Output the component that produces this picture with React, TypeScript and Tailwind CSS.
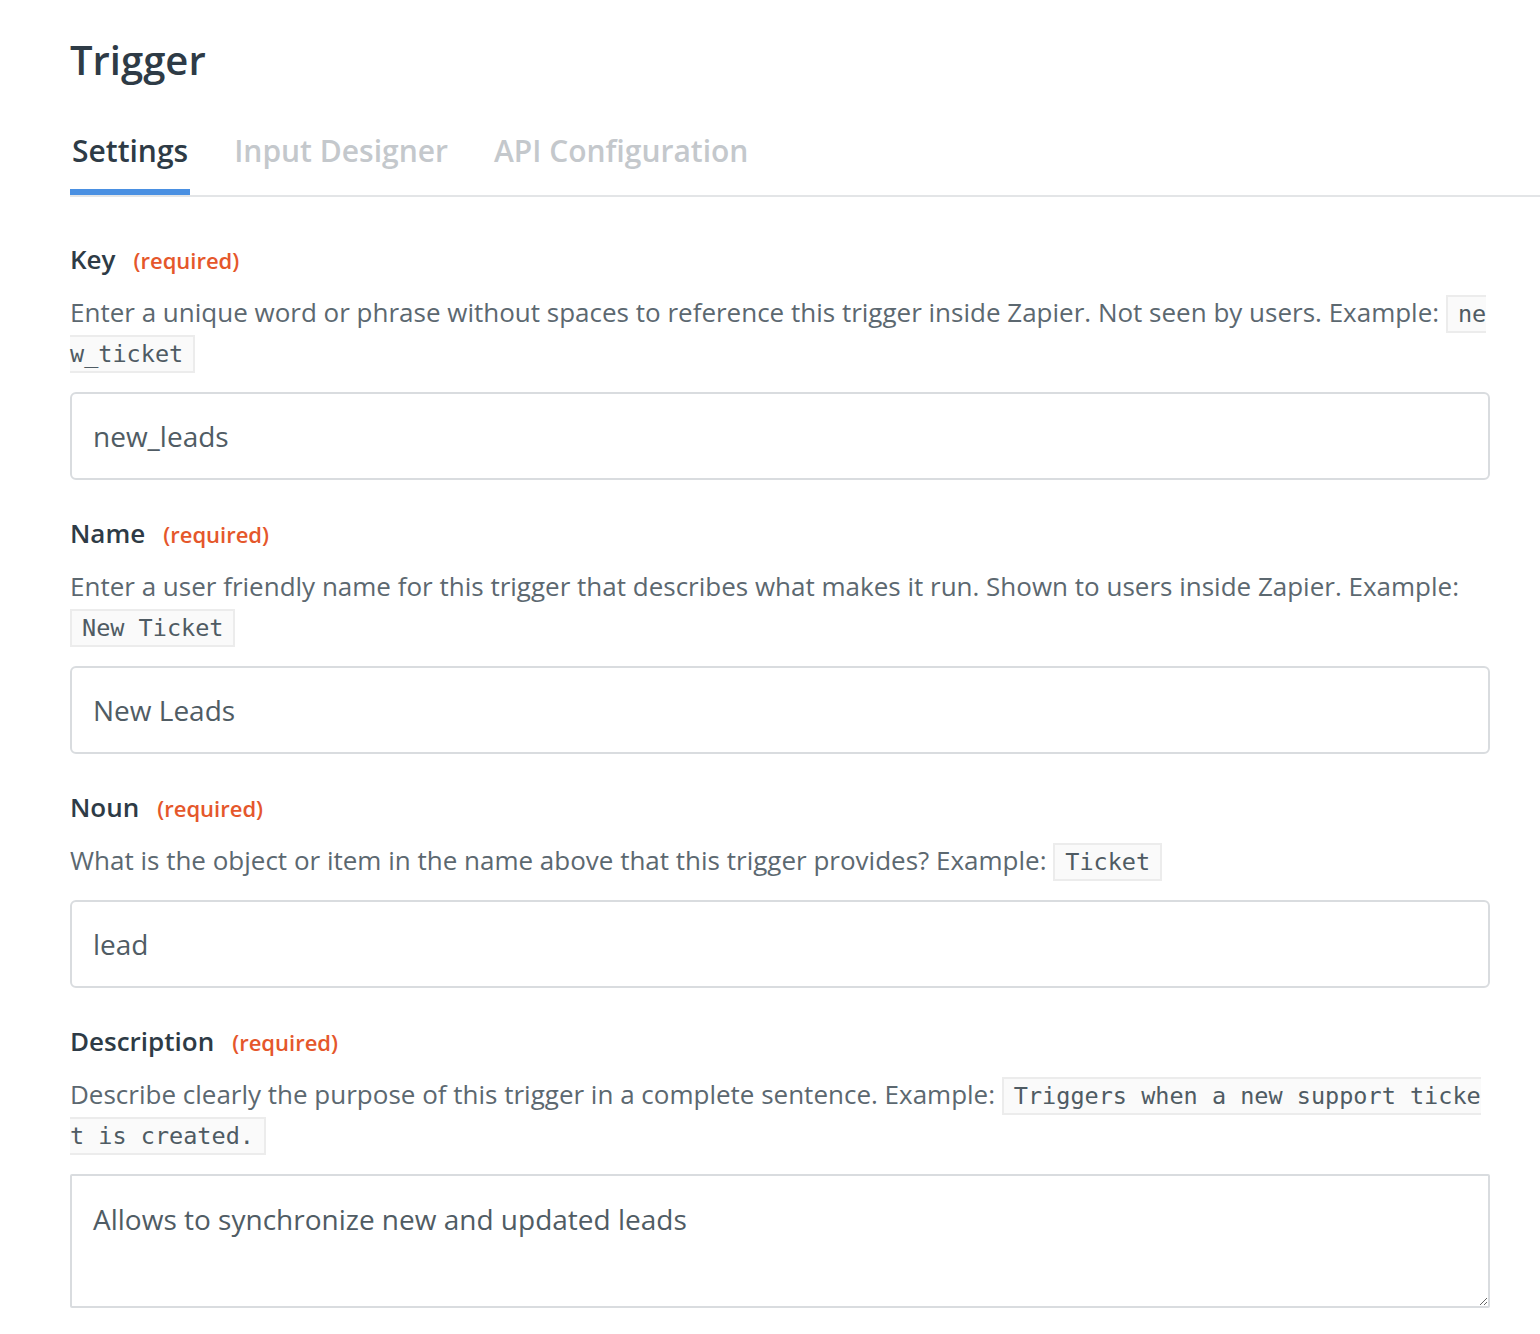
import React from "react";

interface Field {
    label: string;
    before: string;
    code: string;
    value: string;
    multiline?: boolean;
}

const fields: Field[] = [
    {
        label: "Key",
        before: "Enter a unique word or phrase without spaces to reference this trigger inside Zapier. Not seen by users. Example:",
        code: "new_ticket",
        value: "new_leads",
    },
    {
        label: "Name",
        before: "Enter a user friendly name for this trigger that describes what makes it run. Shown to users inside Zapier. Example:",
        code: "New Ticket",
        value: "New Leads",
    },
    {
        label: "Noun",
        before: "What is the object or item in the name above that this trigger provides? Example:",
        code: "Ticket",
        value: "lead",
    },
    {
        label: "Description",
        before: "Describe clearly the purpose of this trigger in a complete sentence. Example:",
        code: "Triggers when a new support ticket is created.",
        value: "Allows to synchronize new and updated leads",
        multiline: true,
    },
];

const tabs = ["Settings", "Input Designer", "API Configuration"];

const App: React.FC = () => {
    return (
        <div className="min-h-screen bg-white pl-[70px] pt-[36px] pb-10 font-['Open_Sans',sans-serif]">
            <h1 className="text-[40px] leading-[48px] font-semibold text-[#2e3b46]">Trigger</h1>

            {/* Tabs */}
            <div className="mt-[47px] flex gap-[42px] border-b-2 border-[#e3e5e7]">
                {tabs.map((t, i) => (
                    <div
                        key={t}
                        className={`px-[2px] text-[30px] leading-[40px] font-semibold pb-[18px] border-b-[6px] ${
                            i === 0 ? "text-[#2e3b46] border-[#4a90e2]" : "text-[#c4c8cc] border-transparent"
                        }`}
                    >
                        {t}
                    </div>
                ))}
            </div>

            {/* Form */}
            <div className="pr-[50px] pt-[44px] flex flex-col gap-[35px]">
                {fields.map((f) => (
                    <div key={f.label}>
                        <div className="flex items-baseline gap-[18px] leading-[36px]">
                            <span className="text-[26px] font-semibold text-[#2e3b46]">{f.label}</span>
                            <span className="text-[22px] font-semibold text-[#e5572b]">(required)</span>
                        </div>
                        <p className="mt-[14px] text-[26px] leading-[40px] text-[#5c6870]">
                            {f.before}{" "}
                            <code className="break-all px-[10px] py-[3px] border-2 border-[#ececec] bg-[#fafafa] text-[23.5px] leading-[20px] text-[#4f5b63] font-['DejaVu_Sans_Mono',monospace]">
                                {f.code}
                            </code>
                        </p>
                        {f.multiline ? (
                            <textarea
                                defaultValue={f.value}
                                className="mt-[20px] block w-full h-[134px] border-2 border-[#d9dcdf] rounded-[2px] px-[21px] pt-[24px] text-[28px] leading-[38px] text-[#505c64] outline-none"
                            />
                        ) : (
                            <input
                                type="text"
                                defaultValue={f.value}
                                className="mt-[20px] block w-full h-[88px] border-2 border-[#d9dcdf] rounded-[6px] px-[21px] text-[28px] text-[#505c64] outline-none"
                            />
                        )}
                    </div>
                ))}
            </div>
        </div>
    );
};

export default App;
